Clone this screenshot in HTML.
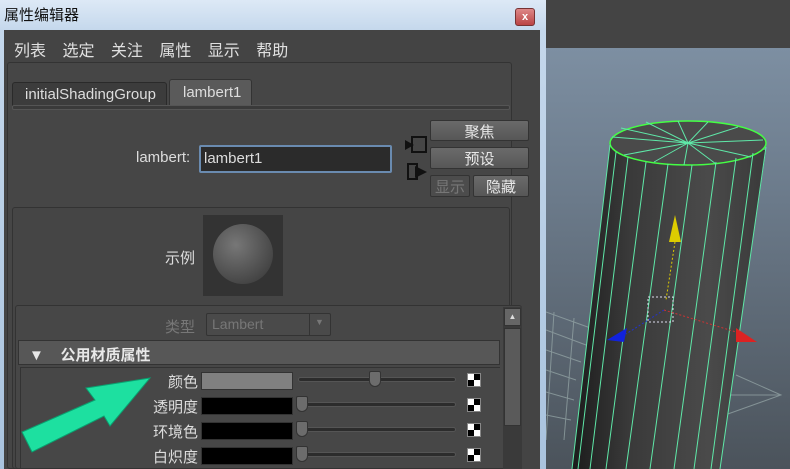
<!DOCTYPE html><html><head><meta charset="utf-8"><style>
*{margin:0;padding:0;box-sizing:border-box}
body{width:790px;height:469px;overflow:hidden;position:relative;background:#444;font-family:"Liberation Sans","Noto Sans CJK SC",sans-serif;color:#ddd;font-size:14px}
.a{position:absolute}
.btn{position:absolute;background:linear-gradient(#6a6a6a,#575757);border:1px solid #333;border-radius:2px;color:#e8e8e8;text-align:center;font-size:15px}
.lbl{position:absolute;text-align:right;width:120px;left:78px;font-size:15px;color:#ddd}
.sw{position:absolute;left:201px;width:92px;height:18px;background:#000;border:1px solid #333}
.tr{position:absolute;left:298px;width:158px;height:5px;background:#2c2c2c;border:1px solid #555;border-radius:3px}
.th{position:absolute;width:12px;height:16px;background:#6c6c6c;border:1px solid #333;border-radius:2px 2px 6px 6px}
.ck{position:absolute;left:467px;width:14px;height:14px;background:conic-gradient(#000 0 25%,#fff 0 50%,#000 0 75%,#fff 0);border:1px solid #888}
</style></head><body>
<div class="a" style="left:0;top:0;width:546px;height:469px;background:linear-gradient(#dde9f6,#c5d8ec 30px,#a9c3de)"></div>
<div class="a" style="left:4px;top:4px;font-size:15px;color:#111">属性编辑器</div>
<div class="a" style="left:515px;top:8px;width:20px;height:18px;background:linear-gradient(#d88,#b44);border:1px solid #733;border-radius:3px;color:#fff;font-size:11px;text-align:center;line-height:16px;font-weight:bold">x</div>
<div class="a" style="left:4px;top:30px;width:536px;height:439px;background:#444"></div>
<div class="a" style="left:14px;top:37px;font-size:16px;color:#e0e0e0;word-spacing:12px">列表 选定 关注 属性 显示 帮助</div>
<div class="a" style="left:7px;top:62px;width:505px;height:407px;background:#464646;border:1px solid #333;border-radius:3px"></div>
<div class="a" style="left:12px;top:82px;width:155px;height:24px;background:#3c3c3c;border:1px solid #2a2a2a;border-radius:3px 3px 0 0;font-size:15px;padding:3px 0 0 12px;color:#ddd">initialShadingGroup</div>
<div class="a" style="left:169px;top:79px;width:83px;height:27px;background:#5a5a5a;border:1px solid #333;border-radius:3px 3px 0 0;font-size:15px;padding:4px 0 0 13px;color:#ddd">lambert1</div>
<div class="a" style="left:12px;top:105px;width:498px;height:5px;background:#3a3a3a;border:1px solid #555;border-radius:2px"></div>
<div class="a" style="left:136px;top:149px;font-size:15px">lambert:</div>
<div class="a" style="left:199px;top:145px;width:193px;height:28px;background:#2b2b2b;border:2px solid #6a8bb0;border-radius:2px;font-size:15px;padding:3px 0 0 3px">lambert1</div>
<svg class="a" style="left:402px;top:134px" width="30" height="48"><rect x="10" y="3" width="14" height="15" fill="none" stroke="#111" stroke-width="2"/><path d="M3 6l9 5-9 5z" fill="#111"/><rect x="6" y="30" width="9" height="15" fill="none" stroke="#111" stroke-width="2"/><path d="M13 32l12 6-12 6z" fill="#111"/></svg>
<div class="btn" style="left:430px;top:120px;width:99px;height:21px">聚焦</div>
<div class="btn" style="left:430px;top:147px;width:99px;height:22px">预设</div>
<div class="btn" style="left:430px;top:175px;width:40px;height:22px;color:#777;background:#4c4c4c">显示</div>
<div class="btn" style="left:473px;top:175px;width:56px;height:22px">隐藏</div>
<div class="a" style="left:12px;top:207px;width:498px;height:262px;background:#454545;border:1px solid #333;border-radius:3px"></div>
<div class="a" style="left:165px;top:247px;font-size:15px">示例</div>
<div class="a" style="left:203px;top:215px;width:80px;height:81px;background:#333"></div>
<div class="a" style="left:213px;top:224px;width:60px;height:60px;border-radius:50%;background:radial-gradient(circle at 38% 35%,#777,#555 50%,#333)"></div>
<div class="a" style="left:15px;top:305px;width:507px;height:164px;background:#474747;border:1px solid #333;border-radius:3px"></div>
<div class="a" style="left:503px;top:307px;width:19px;height:162px;background:#3a3a3a"></div>
<div class="a" style="left:504px;top:308px;width:17px;height:18px;background:#666;border:1px solid #333;color:#ddd;font-size:8px;text-align:center;line-height:16px">▲</div>
<div class="a" style="left:504px;top:328px;width:17px;height:98px;background:#5a5a5a;border:1px solid #333"></div>
<div class="a" style="left:165px;top:316px;font-size:15px;color:#777">类型</div>
<div class="a" style="left:206px;top:313px;width:125px;height:23px;background:#4a4a4a;border:1px solid #333;border-radius:2px;color:#777;font-size:14px;padding:2px 0 0 5px">Lambert<span style="position:absolute;left:102px;top:0;width:1px;height:21px;background:#333"></span><span style="position:absolute;left:108px;top:3px;font-size:9px">▼</span></div>
<div class="a" style="left:18px;top:340px;width:482px;height:25px;background:#575757;border:1px solid #333;font-size:15px;font-weight:bold;padding:3px 0 0 10px;color:#e8e8e8">▼&nbsp;&nbsp;&nbsp; 公用材质属性</div>
<div class="a" style="left:20px;top:367px;width:480px;height:102px;border-left:1px solid #333;border-top:1px solid #333"></div>
<div class="lbl" style="top:371px">颜色</div>
<div class="sw" style="top:372px;background:#808080"></div>
<div class="tr" style="top:377px"></div><div class="th" style="left:369px;top:371px"></div><div class="ck" style="top:373px"></div>
<div class="lbl" style="top:396px">透明度</div>
<div class="sw" style="top:397px"></div>
<div class="tr" style="top:402px"></div><div class="th" style="left:296px;top:396px"></div><div class="ck" style="top:398px"></div>
<div class="lbl" style="top:421px">环境色</div>
<div class="sw" style="top:422px"></div>
<div class="tr" style="top:427px"></div><div class="th" style="left:296px;top:421px"></div><div class="ck" style="top:423px"></div>
<div class="lbl" style="top:446px">白炽度</div>
<div class="sw" style="top:447px"></div>
<div class="tr" style="top:452px"></div><div class="th" style="left:296px;top:446px"></div><div class="ck" style="top:448px"></div>
<svg class="a" style="left:0;top:0" width="546" height="469"><path d="M150 378L86 388L95 400L22 432L32 452L104 416L110 426Z" fill="#1de0a0" stroke="#0aa070" stroke-width="1"/></svg>
<div class="a" style="left:546px;top:0;width:244px;height:469px;background:linear-gradient(#7d8fa2 48px,#6b7a8a 200px,#4b535b)"></div>
<div class="a" style="left:546px;top:0;width:244px;height:48px;background:#444"></div>
<svg class="a" style="left:546px;top:0" width="244" height="469">
<defs><linearGradient id="g" x1="0" x2="1"><stop offset="0" stop-color="#1c1c1c"/><stop offset=".3" stop-color="#3a3a3a"/><stop offset=".7" stop-color="#4a4a4a"/><stop offset="1" stop-color="#3a3a3a"/></linearGradient></defs>
<g stroke="#9aa" stroke-width="1" fill="none" opacity=".7"><path d="M0 312L50 330M0 330L40 345M0 350L35 362M0 370L30 380M0 392L28 400M0 415L25 420M8 312L0 440M28 318L18 440M190 375L235 395L165 420M180 395L235 395"/></g>
<path d="M64 145L220 150L174 469L26 469Z" fill="url(#g)"/>
<ellipse cx="142" cy="143" rx="78" ry="22" fill="#4a4a4a" stroke="#4f4" stroke-width="1.5"/>
<g stroke="#5fe8a8" stroke-width="1" fill="none"><path d="M64 145L26 469M70 152L32 469M82 157L44 469M100 162L60 469M122 164L80 469M146 165L104 469M170 162L128 469M190 158L148 469M207 153L165 469M220 147L174 469"/>
<path d="M142 143L66 137M142 143L75 128M142 143L100 122M142 143L132 121M142 143L162 122M142 143L192 127M142 143L217 140M142 143L205 157M142 143L170 164M142 143L138 165M142 143L108 162M142 143L78 155"/></g>
<path d="M129 215L123 242L135 242Z" fill="#dc0"/><path d="M129 242L120 300" stroke="#dc0" stroke-dasharray="2 2"/>
<rect x="102" y="297" width="25" height="25" fill="none" stroke="#dde" stroke-dasharray="2 2"/>
<path d="M61 340L81 328L78 342Z" fill="#12d"/><path d="M118 310L80 334" stroke="#23c" stroke-dasharray="2 2"/>
<path d="M211 342L190 328L190 342Z" fill="#d22"/><path d="M118 310L190 332" stroke="#c33" stroke-dasharray="2 2"/>
</svg>
</body></html>
